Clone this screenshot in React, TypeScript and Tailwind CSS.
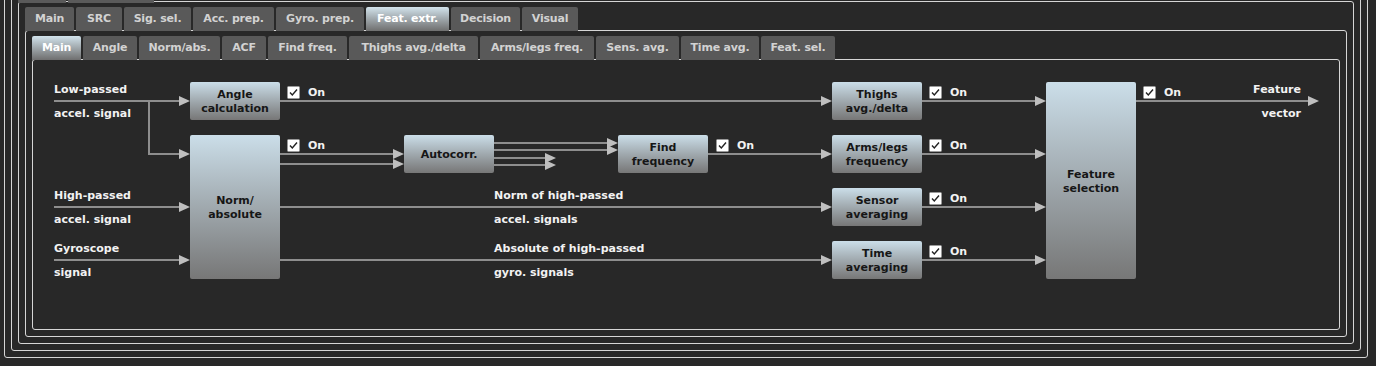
import React from "react";

const OX = 33;
const OY = 60;

const outerTabs: [string, number][] = [
  ["Main", 49], ["SRC", 46], ["Sig. sel.", 67], ["Acc. prep.", 81], ["Gyro. prep.", 88],
  ["Feat. extr.", 83], ["Decision", 69], ["Visual", 56],
];
const innerTabs: [string, number][] = [
  ["Main", 49], ["Angle", 54], ["Norm/abs.", 81], ["ACF", 44], ["Find freq.", 79],
  ["Thighs avg./delta", 129], ["Arms/legs freq.", 114], ["Sens. avg.", 83], ["Time avg.", 78], ["Feat. sel.", 74],
];

type Block = { x: number; y: number; w: number; h: number; lines: string[] };
const blocks: Block[] = [
  { x: 190, y: 82, w: 90, h: 38, lines: ["Angle", "calculation"] },
  { x: 190, y: 135, w: 90, h: 144, lines: ["Norm/", "absolute"] },
  { x: 404, y: 135, w: 90, h: 38, lines: ["Autocorr."] },
  { x: 618, y: 135, w: 90, h: 38, lines: ["Find", "frequency"] },
  { x: 832, y: 82, w: 90, h: 38, lines: ["Thighs", "avg./delta"] },
  { x: 832, y: 135, w: 90, h: 38, lines: ["Arms/legs", "frequency"] },
  { x: 832, y: 188, w: 90, h: 38, lines: ["Sensor", "averaging"] },
  { x: 832, y: 241, w: 90, h: 38, lines: ["Time", "averaging"] },
  { x: 1046, y: 82, w: 90, h: 197, lines: ["Feature", "selection"] },
];

// horizontal segments: [x1, x2, y]
const hsegs: [number, number, number][] = [
  [54, 181, 101],
  [149, 181, 154],
  [54, 181, 207],
  [54, 181, 260],
  [280, 823, 101],
  [280, 395, 154],
  [280, 395, 164],
  [494, 609, 143],
  [494, 609, 150],
  [494, 547, 158],
  [494, 547, 165],
  [708, 823, 154],
  [280, 823, 207],
  [280, 823, 260],
  [922, 1037, 101],
  [922, 1037, 154],
  [922, 1037, 207],
  [922, 1037, 260],
  [1136, 1309, 101],
];

// arrow tips: [x, y]
const arrows: [number, number][] = [
  [190, 101], [190, 154], [190, 207], [190, 260],
  [832, 101], [404, 154], [404, 164],
  [618, 143], [618, 150], [556, 158], [556, 165],
  [832, 154], [832, 207], [832, 260],
  [1046, 101], [1046, 154], [1046, 207], [1046, 260],
  [1319, 101],
];

const checks: [number, number][] = [
  [287, 85], [287, 138], [716, 138],
  [929, 85], [929, 138], [929, 191], [929, 244],
  [1143, 85],
];

type Label = { x: number; y: number; text: string; right?: boolean };
const labels: Label[] = [
  { x: 54, y: 90, text: "Low-passed" },
  { x: 54, y: 114, text: "accel. signal" },
  { x: 54, y: 196, text: "High-passed" },
  { x: 54, y: 220, text: "accel. signal" },
  { x: 54, y: 249, text: "Gyroscope" },
  { x: 54, y: 273, text: "signal" },
  { x: 494, y: 196, text: "Norm of high-passed" },
  { x: 494, y: 220, text: "accel. signals" },
  { x: 494, y: 249, text: "Absolute of high-passed" },
  { x: 494, y: 273, text: "gyro. signals" },
  { x: 1301, y: 90, text: "Feature", right: true },
  { x: 1301, y: 114, text: "vector", right: true },
];

function TabRow({ tabs, active }: { tabs: [string, number][]; active: number }) {
  return (
    <div className="relative z-10 -mb-px flex gap-[2px]">
      {tabs.map(([t, w], i) => (
        <div
          key={t + i}
          style={{ width: w }}
          className={
            i === active
              ? "flex h-[24px] items-center justify-center whitespace-nowrap rounded-t-[2px] bg-gradient-to-b from-[#d2e3ec] to-[#6f6f6f] pt-[1px] text-[11px] font-bold tracking-[-0.2px] text-white"
              : "flex h-[24px] items-center justify-center whitespace-nowrap rounded-t-[2px] bg-[#595959] pt-[1px] text-[11px] font-bold tracking-[-0.2px] text-[#d2d2d2]"
          }
        >
          {t}
        </div>
      ))}
    </div>
  );
}

function CheckBox({ x, y }: { x: number; y: number }) {
  return (
    <div className="absolute flex items-center" style={{ left: x - OX, top: y - OY }}>
      <svg width="13" height="13" viewBox="0 0 13 13">
        <rect x="0.5" y="0.5" width="12" height="12" rx="1" fill="#ffffff" stroke="#9a9a9a" />
        <polyline points="3,6.5 5.3,9 10,3.5" fill="none" stroke="#222222" strokeWidth="1.4" />
      </svg>
      <span className="ml-[8px] pt-[1px] text-[11px] font-bold leading-[13px] text-[#f2f2f2]">On</span>
    </div>
  );
}

function Diagram() {
  return (
    <div className="relative h-full w-full">
      <svg className="absolute left-0 top-0" width="1306" height="269">
        <g transform={`translate(${-OX},${-OY})`}>
          <line x1="149" y1="100" x2="149" y2="155" stroke="#8e8e8e" strokeWidth="2" />
          {hsegs.map(([x1, x2, y], i) => (
            <line key={i} x1={x1} y1={y} x2={x2} y2={y} stroke="#8e8e8e" strokeWidth="2" />
          ))}
          {arrows.map(([x, y], i) => (
            <polygon key={i} points={`${x},${y} ${x - 11},${y - 5} ${x - 11},${y + 5}`} fill="#bfbfbf" />
          ))}
        </g>
      </svg>
      {blocks.map((b, i) => (
        <div
          key={i}
          className="absolute flex flex-col items-center justify-center rounded-[2px] bg-gradient-to-b from-[#cbdee9] to-[#777777] pt-[2px] text-[11px] font-bold leading-[14px] text-[#161616]"
          style={{ left: b.x - OX, top: b.y - OY, width: b.w, height: b.h }}
        >
          {b.lines.map((l) => (
            <span key={l}>{l}</span>
          ))}
        </div>
      ))}
      {checks.map(([x, y], i) => (
        <CheckBox key={i} x={x} y={y} />
      ))}
      {labels.map((l, i) => (
        <div
          key={i}
          className="absolute whitespace-nowrap text-[11px] font-bold leading-[14px] text-[#f2f2f2]"
          style={
            l.right
              ? { right: 1339 - l.x, top: l.y - 7 - OY }
              : { left: l.x - OX, top: l.y - 7 - OY }
          }
        >
          {l.text}
        </div>
      ))}
    </div>
  );
}

export default function App() {
  return (
    <div
      className="h-[366px] w-[1376px] overflow-hidden bg-[#282828] pl-[4px] pr-[8px]"
      style={{ fontFamily: '"DejaVu Sans", Verdana, sans-serif' }}
    >
      {/* frame 1 */}
      <div className="-mt-[20px] h-[378px] rounded-[3px] border border-[#d6d6d6] p-[6px]">
        {/* frame 2 */}
        <div className="flex h-full flex-col rounded-[3px] border border-[#d6d6d6] px-[6px] pb-[6px] pt-[12px]">
          {/* stubs of an upper tab row */}
          <div className="relative z-10 -mb-[2px] flex gap-[2px]">
            <div className="h-[3px] w-[48px] bg-[#5a5a5a]" />
            <div className="h-[3px] w-[86px] bg-[#5a5a5a]" />
          </div>
          {/* frame 3 */}
          <div className="flex flex-1 flex-col rounded-[3px] border border-[#d6d6d6] px-[6px] pb-[6px] pt-[5px]">
            <TabRow tabs={outerTabs} active={5} />
            {/* frame 4 */}
            <div className="flex flex-1 flex-col rounded-[3px] border border-[#d6d6d6] px-[6px] pb-[6px] pt-[5px]">
              <TabRow tabs={innerTabs} active={0} />
              {/* frame 5 */}
              <div className="flex-1 rounded-[3px] border border-[#d6d6d6]">
                <Diagram />
              </div>
            </div>
          </div>
        </div>
      </div>
    </div>
  );
}
